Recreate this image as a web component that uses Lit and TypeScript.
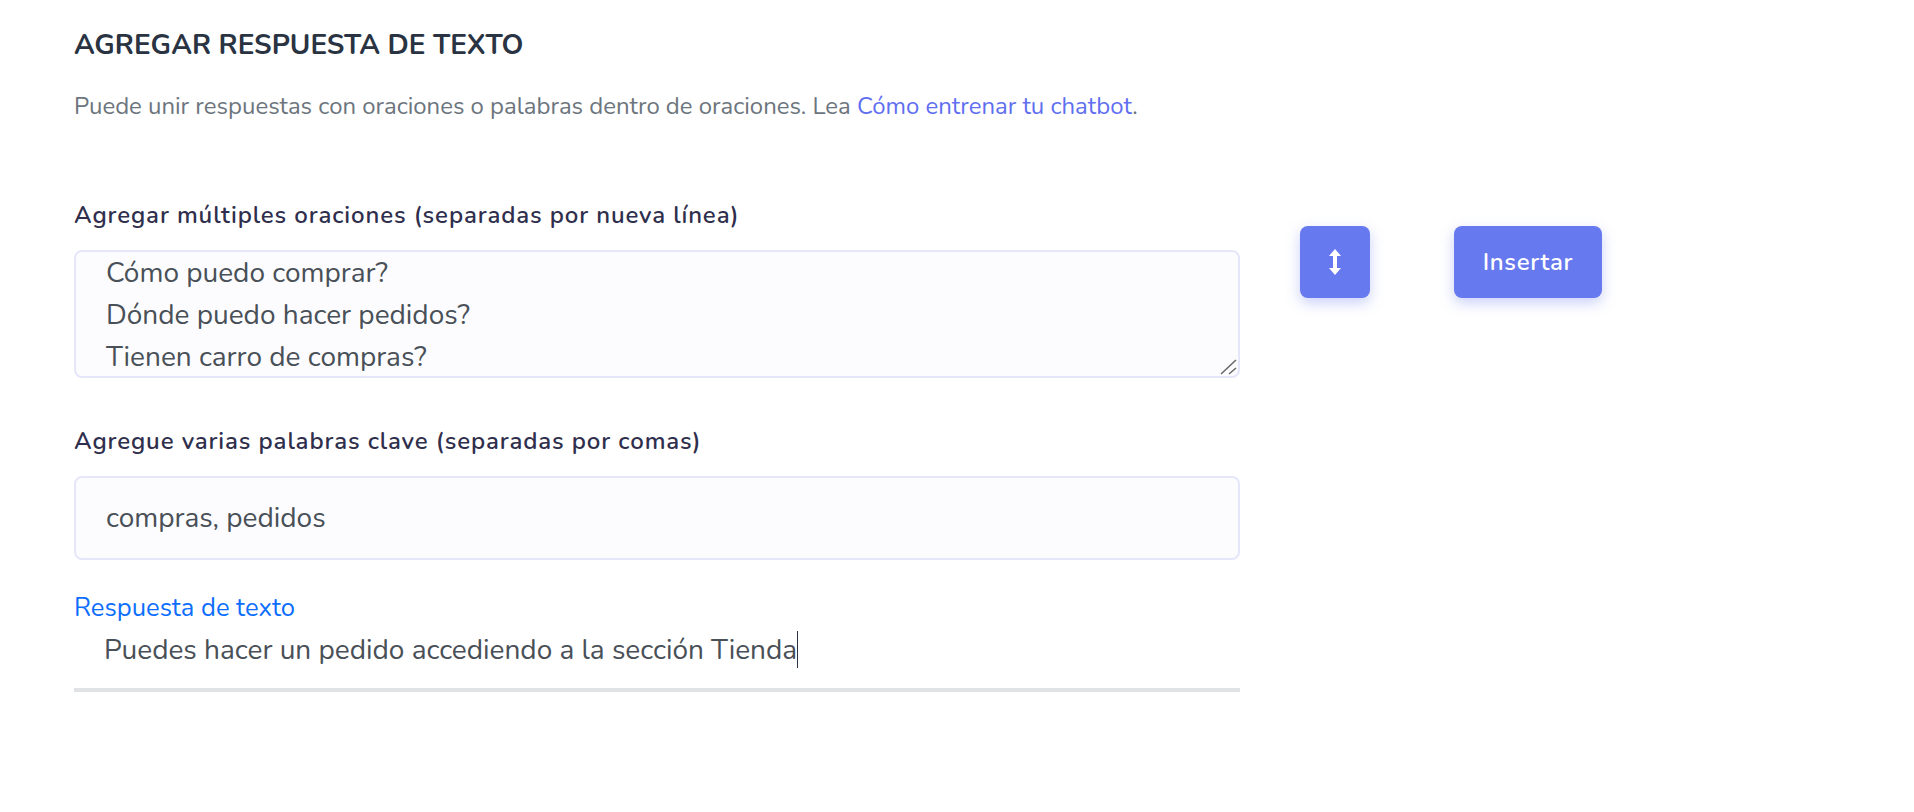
import {LitElement, html, css} from 'lit';
import {customElement} from 'lit/decorators.js';

@customElement('app-root')
export class AppRoot extends LitElement {
  static styles = css`
    :host {
      display: block;
      height: 812px;
      overflow: hidden;
      background: #fff;
      font-family: 'Nunito', 'Lato', 'Noto Sans', sans-serif;
    }
    .top-shadow {
      height: 1px;
      margin: -1px 130px 0;
      box-shadow: 0 8px 30px rgba(0, 0, 0, 0.05);
    }
    .page {
      padding: 28px 0 0 74px;
    }
    h1 {
      margin: 0;
      font-size: 27.9px;
      line-height: 34px;
      font-weight: 700;
      color: #2a3342;
    }
    .intro {
      margin: 28px 0 0;
      font-size: 23.95px;
      line-height: 32px;
      color: #6c757d;
    }
    .intro a {
      color: #5f6ff0;
      text-decoration: none;
    }
    .row {
      display: flex;
      align-items: flex-start;
      margin-top: 78px;
    }
    .form {
      width: 1166px;
    }
    label {
      display: block;
      font-size: 24px;
      line-height: 30px;
      font-weight: 600;
      letter-spacing: 0.88px;
      color: #2f2f4d;
    }
    .area-wrap {
      position: relative;
      margin-top: 20px;
    }
    textarea,
    input {
      display: block;
      box-sizing: border-box;
      width: 100%;
      margin: 0;
      border: 2px solid #e5e6fa;
      border-radius: 8px;
      background: #fcfcff;
      font: inherit;
      font-size: 28px;
      color: #495057;
      outline: none;
    }
    textarea {
      height: 128px;
      padding: 0 30px;
      line-height: 42px;
      overflow: hidden;
      resize: none;
    }
    .grip {
      position: absolute;
      right: 3px;
      bottom: 3px;
    }
    input {
      height: 84px;
      margin-top: 20px;
      padding: 0 30px;
    }
    .second {
      margin-top: 48px;
    }
    .response {
      margin-top: 32px;
    }
    .response-label {
      font-size: 25.6px;
      line-height: 32px;
      color: #0d6efd;
    }
    .response-text {
      height: 58px;
      padding: 6px 0 0 30px;
      border-bottom: 4px solid #e1e2e6;
      font-size: 28px;
      line-height: 40px;
      color: #495057;
    }
    .caret {
      display: inline-block;
      width: 1px;
      height: 37px;
      background: #2a3342;
      vertical-align: -9px;
    }
    .actions {
      display: flex;
      gap: 84px;
      margin: 26px 0 0 60px;
    }
    button {
      display: flex;
      align-items: center;
      justify-content: center;
      height: 72px;
      border: 0;
      border-radius: 8px;
      background: #6779ef;
      box-shadow: 0 5px 14px rgba(103, 121, 239, 0.35);
      color: #fff;
      font: inherit;
      font-size: 24px;
      font-weight: 600;
      letter-spacing: 0.7px;
    }
    .icon-btn {
      width: 70px;
    }
    .text-btn {
      width: 148px;
    }
  `;

  render() {
    return html`
      <div class="top-shadow"></div>
      <div class="page">
        <h1>AGREGAR RESPUESTA DE TEXTO</h1>
        <p class="intro">
          Puede unir respuestas con oraciones o palabras dentro de oraciones. Lea
          <a href="#">Cómo entrenar tu chatbot</a>.
        </p>
        <div class="row">
          <div class="form">
            <label>Agregar múltiples oraciones (separadas por nueva línea)</label>
            <div class="area-wrap">
              <textarea .value=${'Cómo puedo comprar?\nDónde puedo hacer pedidos?\nTienen carro de compras?'}></textarea>
              <svg class="grip" width="17" height="16" viewBox="0 0 17 16" stroke="#666" stroke-width="1.5" fill="none">
                <path d="M1 15 16 1M9 15 16 9" />
              </svg>
            </div>
            <label class="second">Agregue varias palabras clave (separadas por comas)</label>
            <input .value=${'compras, pedidos'} />
            <div class="response">
              <div class="response-label">Respuesta de texto</div>
              <div class="response-text">Puedes hacer un pedido accediendo a la sección Tienda<span class="caret"></span></div>
            </div>
          </div>
          <div class="actions">
            <button class="icon-btn" aria-label="Expandir">
              <svg width="14" height="28" viewBox="0 0 14 28" fill="#fff">
                <path d="M7 1 13 8H9V20H13L7 27 1 20H5V8H1Z" />
              </svg>
            </button>
            <button class="text-btn">Insertar</button>
          </div>
        </div>
      </div>
    `;
  }
}
